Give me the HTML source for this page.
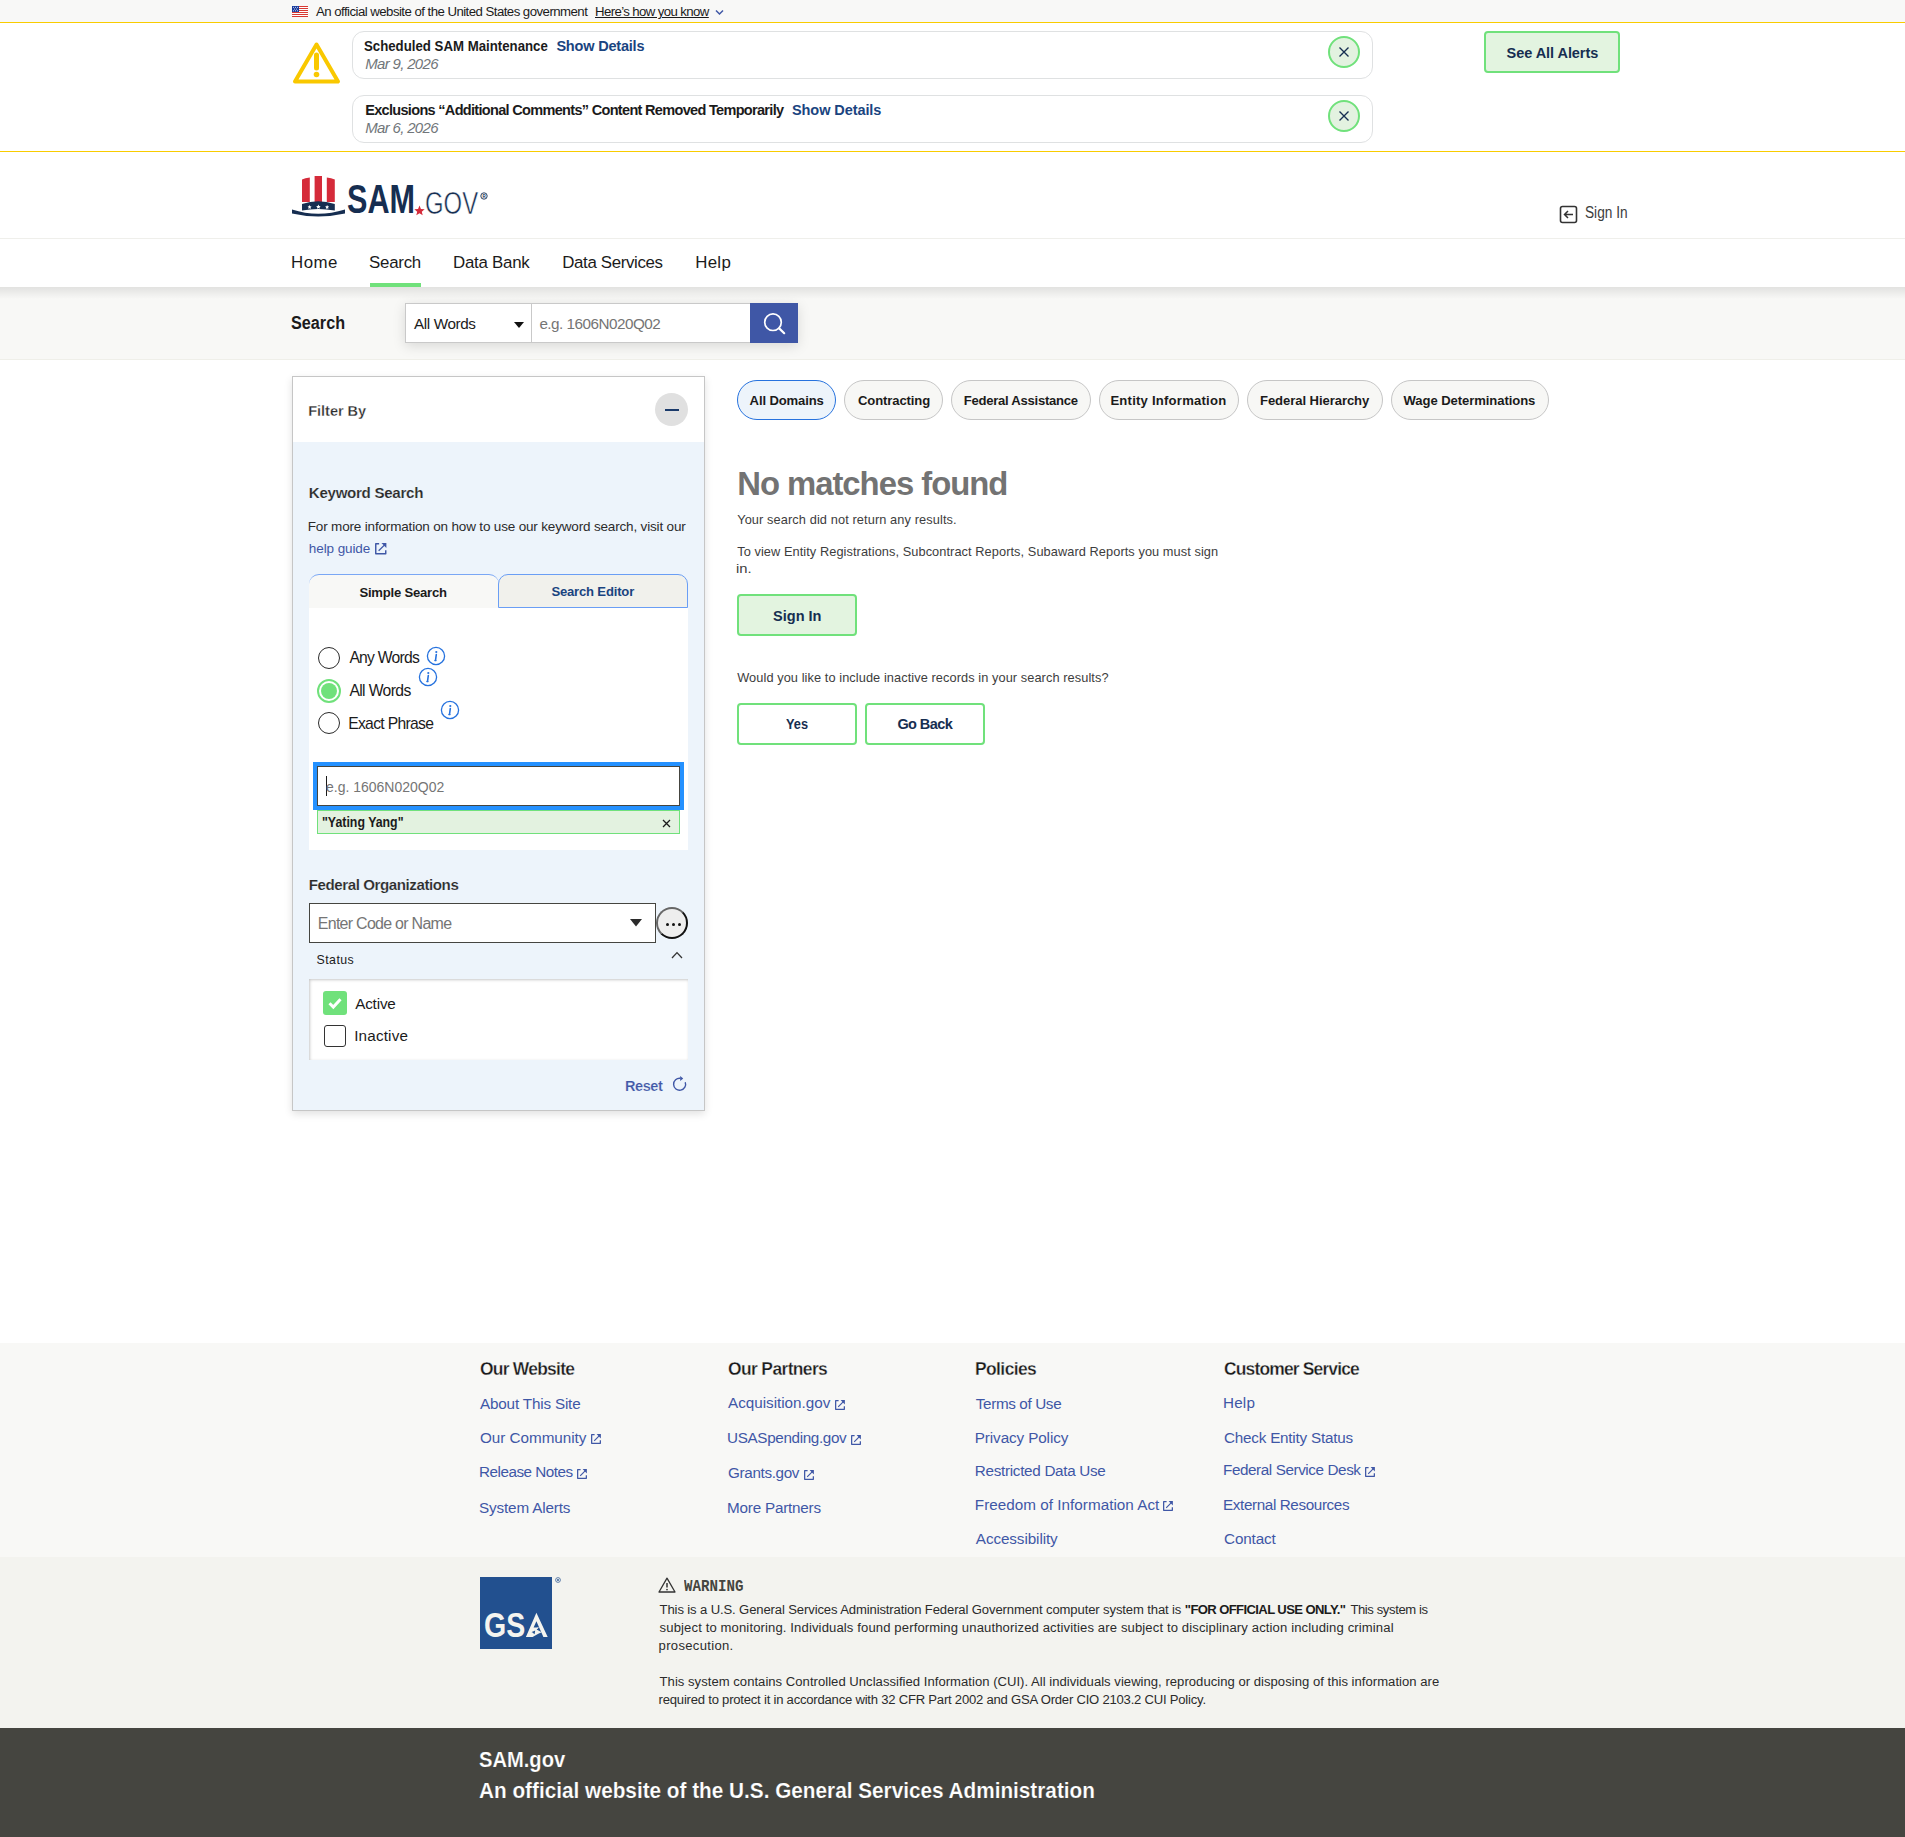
<!DOCTYPE html>
<html><head><meta charset="utf-8"><title>SAM.gov Search</title><style>
*{margin:0;padding:0;box-sizing:border-box}
html,body{width:1905px;height:1837px;overflow:hidden; background:#fff;font-family:"Liberation Sans",sans-serif;}
.t{position:absolute;white-space:nowrap;}
svg{position:absolute;display:block}
</style></head><body>
<div style="position:absolute;left:0px;top:0px;width:1905px;height:22px;background:#f8f8f7"></div>
<svg style="left:292px;top:6px" width="16" height="11" viewBox="0 0 16 11"><rect width="16" height="11" fill="#fff"/><rect y="0" width="16" height="1" fill="#d83933"/><rect y="2" width="16" height="1" fill="#d83933"/><rect y="4" width="16" height="1" fill="#d83933"/><rect y="6" width="16" height="1" fill="#d83933"/><rect y="8" width="16" height="1" fill="#d83933"/><rect y="10" width="16" height="1" fill="#d83933"/><rect width="7" height="6" fill="#1a3c9e"/><g fill="#fff"><circle cx="1.5" cy="1.3" r=".5"/><circle cx="3.5" cy="1.3" r=".5"/><circle cx="5.5" cy="1.3" r=".5"/><circle cx="2.5" cy="3" r=".5"/><circle cx="4.5" cy="3" r=".5"/><circle cx="1.5" cy="4.7" r=".5"/><circle cx="3.5" cy="4.7" r=".5"/><circle cx="5.5" cy="4.7" r=".5"/></g></svg>
<svg style="left:715px;top:9px" width="9" height="7" viewBox="0 0 9 7"><path d="M1 1.5l3.5 3.5L8 1.5" fill="none" stroke="#3f57a6" stroke-width="1.5"/></svg>
<div style="position:absolute;left:0px;top:22px;width:1905px;height:1px;background:#f9cc00"></div>
<svg style="left:292px;top:41px" width="49" height="44" viewBox="0 0 49 44"><path d="M24.5 3.5 L46 40.5 H3 Z" fill="none" stroke="#f9c800" stroke-width="4" stroke-linejoin="round"/><path d="M24.5 14v13" stroke="#f9c800" stroke-width="5" stroke-linecap="round"/><circle cx="24.5" cy="33.5" r="2.8" fill="#f9c800"/></svg>
<div style="position:absolute;left:352px;top:31px;width:1021px;height:48px;border:1px solid #dfe1e2;border-radius:12px;background:#fff"></div>
<div style="position:absolute;left:1328px;top:36px;width:32px;height:32px;border:2px solid #70e17b;border-radius:50%;background:#e3f2e0"></div>
<svg style="left:1338px;top:46px" width="12" height="12" viewBox="0 0 12 12"><path d="M1.5 1.5l9 9M10.5 1.5l-9 9" stroke="#162e51" stroke-width="1.35"/></svg>
<div style="position:absolute;left:352px;top:95px;width:1021px;height:48px;border:1px solid #dfe1e2;border-radius:12px;background:#fff"></div>
<div style="position:absolute;left:1328px;top:100px;width:32px;height:32px;border:2px solid #70e17b;border-radius:50%;background:#e3f2e0"></div>
<svg style="left:1338px;top:110px" width="12" height="12" viewBox="0 0 12 12"><path d="M1.5 1.5l9 9M10.5 1.5l-9 9" stroke="#162e51" stroke-width="1.35"/></svg>
<div style="position:absolute;left:1484px;top:31px;width:136px;height:42px;border:2px solid #70e17b;border-radius:4px;background:#e3f4e0"></div>
<div style="position:absolute;left:0px;top:151px;width:1905px;height:1px;background:#f9cc00"></div>
<svg style="left:291px;top:175px" width="56" height="42" viewBox="0 0 56 42"><path d="M11 4.5 Q14 3.2 18.8 2.6 V27 H11 Z" fill="#d52b3a"/><path d="M23.6 1 H31 V27 H23.6 Z" fill="#d52b3a"/><path d="M35.8 2.6 Q40.5 3.2 43.8 4.5 V27 H35.8 Z" fill="#d52b3a"/><path d="M11 29 Q27 23.5 43.8 29 V35.5 Q27 32.5 11 35.5 Z" fill="#162e51"/><path d="M1 34.5 Q27 43 54 34.5 V38.5 Q27 44.5 1 38.5 Z" fill="#162e51"/><path transform="translate(18.6 32.2) scale(2.1)" d="M0 -1 .29 -.4 .95 -.31 .47 .15 .59 .81 0 .5 -.59 .81 -.47 .15 -.95 -.31 -.29 -.4z" fill="#fff"/><path transform="translate(27.4 31.9) scale(2.4)" d="M0 -1 .29 -.4 .95 -.31 .47 .15 .59 .81 0 .5 -.59 .81 -.47 .15 -.95 -.31 -.29 -.4z" fill="#fff"/><path transform="translate(36.1 32.2) scale(2.1)" d="M0 -1 .29 -.4 .95 -.31 .47 .15 .59 .81 0 .5 -.59 .81 -.47 .15 -.95 -.31 -.29 -.4z" fill="#fff"/></svg>
<svg style="left:414px;top:205px" width="11" height="11" viewBox="0 0 24 24"><path d="M12 1l3.1 7.6 8.2.6-6.3 5.3 2 8L12 18.2 5 22.5l2-8L.7 9.2l8.2-.6z" fill="#d52b3a"/></svg>
<svg style="left:480px;top:192px" width="8" height="8" viewBox="0 0 8 8"><circle cx="4" cy="4" r="3.2" fill="none" stroke="#162e51" stroke-width=".9"/><text x="2.4" y="5.6" font-size="4.5" font-family="Liberation Sans" font-weight="700" fill="#162e51">R</text></svg>
<svg style="left:1559px;top:205px" width="19" height="19" viewBox="0 0 19 19"><rect x="1.5" y="1.5" width="16" height="16" rx="2" fill="none" stroke="#333" stroke-width="1.6"/><path d="M14 9.5H5.5M9 6 5.5 9.5 9 13" fill="none" stroke="#333" stroke-width="1.5"/></svg>
<div style="position:absolute;left:0px;top:238px;width:1905px;height:1px;background:#efefeb"></div>
<div style="position:absolute;left:370px;top:283px;width:51px;height:4px;background:#70e17b"></div>
<div style="position:absolute;left:0px;top:287px;width:1905px;height:72px;background:#f8f8f6"></div>
<div style="position:absolute;left:0px;top:359px;width:1905px;height:1px;background:#efefe9"></div>
<div style="position:absolute;left:0px;top:287px;width:1905px;height:12px;background:linear-gradient(rgba(0,0,0,.09),rgba(0,0,0,0))"></div>
<div style="position:absolute;left:405px;top:303px;width:393px;height:40px;box-shadow:0 3px 12px rgba(0,0,0,.13)"></div>
<div style="position:absolute;left:405px;top:303px;width:127px;height:40px;background:#fff;border:1px solid #c9c9c9"></div>
<div style="position:absolute;left:531px;top:303px;width:220px;height:40px;background:#fff;border:1px solid #c9c9c9"></div>
<div style="position:absolute;left:750px;top:303px;width:48px;height:40px;background:#3f57a6"></div>
<svg style="left:762px;top:311px" width="24" height="24" viewBox="0 0 24 24"><circle cx="11" cy="11.2" r="8.3" fill="none" stroke="#fff" stroke-width="1.7"/><path d="M17.2 17.4 22.2 22.2" stroke="#fff" stroke-width="2.2" stroke-linecap="round"/></svg>
<svg style="left:513px;top:321px" width="12" height="8" viewBox="0 0 12 8"><path d="M1 1h10L6 7z" fill="#111"/></svg>
<div style="position:absolute;left:292px;top:376px;width:413px;height:735px;border:1px solid #c6c6c6;background:#edf4fb;box-shadow:0 3px 8px rgba(0,0,0,.12)"></div>
<div style="position:absolute;left:293px;top:377px;width:411px;height:65px;background:#fff"></div>
<div style="position:absolute;left:655px;top:393px;width:33px;height:33px;background:#e0e0e0;border-radius:50%"></div>
<div style="position:absolute;left:665px;top:408.8px;width:14px;height:1.8px;background:#1a3a6a"></div>
<svg style="left:375px;top:543px" width="11.5" height="11.5" viewBox="0 0 10 10"><path d="M3.6 .65H.65V9.35H9.35V6.2" fill="none" stroke="#3f57a6" stroke-width="1.25" stroke-linejoin="round"/><path d="M3.2 6.8 8.6 1.4" fill="none" stroke="#3f57a6" stroke-width="1.15"/><path d="M5.6 .1H9.9V4.4Z" fill="#3f57a6"/></svg>
<div style="position:absolute;left:309px;top:574px;width:190px;height:34px;background:#f8f8f6;border-top:1px solid #7aa7f5;border-radius:10px 10px 0 0"></div>
<div style="position:absolute;left:498px;top:574px;width:190px;height:34px;background:#f1f1ec;border:1px solid #6a9ef5;border-radius:10px 10px 0 0"></div>
<div style="position:absolute;left:309px;top:608px;width:379px;height:242px;background:#fff"></div>
<div style="position:absolute;left:318px;top:646.8px;width:22px;height:22px;border:1.6px solid #2b2b2b;border-radius:50%;background:#fff"></div>
<div style="position:absolute;left:318px;top:711.9px;width:22px;height:22px;border:1.6px solid #2b2b2b;border-radius:50%;background:#fff"></div>
<div style="position:absolute;left:317px;top:679px;width:24px;height:24px;border:2.5px solid #70e17b;border-radius:50%;background:#fff"></div>
<div style="position:absolute;left:321px;top:683px;width:16px;height:16px;background:#70e17b;border-radius:50%"></div>
<svg style="left:426px;top:646px" width="20" height="20" viewBox="0 0 20 20"><circle cx="10" cy="10" r="8.6" fill="none" stroke="#2672de" stroke-width="1.3"/><path d="M10.3 8.5 9.5 14.4" stroke="#2672de" stroke-width="1.6" stroke-linecap="round"/><path d="M8.3 14.6h2.2" stroke="#2672de" stroke-width="1.1"/><circle cx="10.3" cy="6.0" r="1.1" fill="#2672de"/></svg>
<svg style="left:418px;top:667px" width="20" height="20" viewBox="0 0 20 20"><circle cx="10" cy="10" r="8.6" fill="none" stroke="#2672de" stroke-width="1.3"/><path d="M10.3 8.5 9.5 14.4" stroke="#2672de" stroke-width="1.6" stroke-linecap="round"/><path d="M8.3 14.6h2.2" stroke="#2672de" stroke-width="1.1"/><circle cx="10.3" cy="6.0" r="1.1" fill="#2672de"/></svg>
<svg style="left:440px;top:700px" width="20" height="20" viewBox="0 0 20 20"><circle cx="10" cy="10" r="8.6" fill="none" stroke="#2672de" stroke-width="1.3"/><path d="M10.3 8.5 9.5 14.4" stroke="#2672de" stroke-width="1.6" stroke-linecap="round"/><path d="M8.3 14.6h2.2" stroke="#2672de" stroke-width="1.1"/><circle cx="10.3" cy="6.0" r="1.1" fill="#2672de"/></svg>
<div style="position:absolute;left:313px;top:762px;width:371px;height:48px;background:#2491ff"></div>
<div style="position:absolute;left:317px;top:766px;width:363px;height:40px;background:#fff;border:1px solid #454540"></div>
<div style="position:absolute;left:326px;top:776px;width:1px;height:20px;background:#1b1b1b"></div>
<div style="position:absolute;left:317px;top:810px;width:363px;height:24px;background:#e3f2e0;border:1px solid #70e17b"></div>
<svg style="left:662px;top:818.5px" width="9" height="9" viewBox="0 0 9 9"><path d="M1 1l7 7M8 1 1 8" stroke="#1b1b1b" stroke-width="1.3"/></svg>
<div style="position:absolute;left:309px;top:903px;width:347px;height:40px;background:#fff;border:1px solid #454540"></div>
<svg style="left:629px;top:918px" width="14" height="10" viewBox="0 0 14 10"><path d="M1 1h12L7 8.5z" fill="#2b2b2b"/></svg>
<div style="position:absolute;left:655.8px;top:907px;width:32px;height:32px;border:2px solid #111;border-top-color:#666;border-left-color:#666;border-radius:50%;background:#eee"></div>
<div style="position:absolute;left:665.85px;top:922.6px;width:3.3px;height:3.3px;background:#111;border-radius:50%"></div>
<div style="position:absolute;left:671.65px;top:922.6px;width:3.3px;height:3.3px;background:#111;border-radius:50%"></div>
<div style="position:absolute;left:677.5500000000001px;top:922.6px;width:3.3px;height:3.3px;background:#111;border-radius:50%"></div>
<svg style="left:670.5px;top:951px" width="12" height="8" viewBox="0 0 12 8"><path d="M1 7 6 1.6 11 7" fill="none" stroke="#333" stroke-width="1.3"/></svg>
<div style="position:absolute;left:309px;top:979px;width:379px;height:81px;background:#fff;box-shadow:inset 1px 1px 3px rgba(0,0,0,.22)"></div>
<div style="position:absolute;left:323px;top:991px;width:24px;height:24px;background:#70e17b;border-radius:3px"></div>
<svg style="left:323px;top:991px" width="24" height="24" viewBox="0 0 24 24"><path d="M6.5 12.3 10.3 16 17.5 8.3" fill="none" stroke="#fff" stroke-width="3"/></svg>
<div style="position:absolute;left:324px;top:1025px;width:22px;height:22px;border:1.7px solid #333;border-radius:3px;background:#fff"></div>
<svg style="left:671px;top:1075px" width="18" height="18" viewBox="0 0 18 18"><path d="M9.4 3.3 A6 6 0 1 0 14.24 7.15" fill="none" stroke="#3f57a6" stroke-width="1.4"/><path d="M9.2 1.1 12.2 3.5 9.2 5.9z" fill="#3f57a6"/></svg>
<div style="position:absolute;left:737px;top:380px;width:99px;height:40px;border:1.5px solid #2672de;border-radius:20px;background:#edf4fb"></div>
<div style="position:absolute;left:844px;top:380px;width:99px;height:40px;border:1px solid #c6c6c6;border-radius:20px;background:#f7f7f5"></div>
<div style="position:absolute;left:951px;top:380px;width:140px;height:40px;border:1px solid #c6c6c6;border-radius:20px;background:#f7f7f5"></div>
<div style="position:absolute;left:1099px;top:380px;width:140px;height:40px;border:1px solid #c6c6c6;border-radius:20px;background:#f7f7f5"></div>
<div style="position:absolute;left:1247px;top:380px;width:136px;height:40px;border:1px solid #c6c6c6;border-radius:20px;background:#f7f7f5"></div>
<div style="position:absolute;left:1391px;top:380px;width:158px;height:40px;border:1px solid #c6c6c6;border-radius:20px;background:#f7f7f5"></div>
<div style="position:absolute;left:737px;top:594px;width:120px;height:42px;border:2px solid #70e17b;border-radius:4px;background:#e3f4e0"></div>
<div style="position:absolute;left:737px;top:703px;width:120px;height:42px;border:2px solid #70e17b;border-radius:4px;background:#fff"></div>
<div style="position:absolute;left:865px;top:703px;width:120px;height:42px;border:2px solid #70e17b;border-radius:4px;background:#fff"></div>
<div style="position:absolute;left:0px;top:1343px;width:1905px;height:214px;background:#f8f8f6"></div>
<div style="position:absolute;left:0px;top:1557px;width:1905px;height:171px;background:#f3f3ef"></div>
<div style="position:absolute;left:0px;top:1728px;width:1905px;height:109px;background:#454540"></div>
<svg style="left:590.8px;top:1434.1px" width="10" height="10" viewBox="0 0 10 10"><path d="M3.6 .65H.65V9.35H9.35V6.2" fill="none" stroke="#3f57a6" stroke-width="1.25" stroke-linejoin="round"/><path d="M3.2 6.8 8.6 1.4" fill="none" stroke="#3f57a6" stroke-width="1.15"/><path d="M5.6 .1H9.9V4.4Z" fill="#3f57a6"/></svg>
<svg style="left:577.0999999999999px;top:1468.8999999999999px" width="10" height="10" viewBox="0 0 10 10"><path d="M3.6 .65H.65V9.35H9.35V6.2" fill="none" stroke="#3f57a6" stroke-width="1.25" stroke-linejoin="round"/><path d="M3.2 6.8 8.6 1.4" fill="none" stroke="#3f57a6" stroke-width="1.15"/><path d="M5.6 .1H9.9V4.4Z" fill="#3f57a6"/></svg>
<svg style="left:834.8px;top:1400.0px" width="10" height="10" viewBox="0 0 10 10"><path d="M3.6 .65H.65V9.35H9.35V6.2" fill="none" stroke="#3f57a6" stroke-width="1.25" stroke-linejoin="round"/><path d="M3.2 6.8 8.6 1.4" fill="none" stroke="#3f57a6" stroke-width="1.15"/><path d="M5.6 .1H9.9V4.4Z" fill="#3f57a6"/></svg>
<svg style="left:851.3px;top:1435.0px" width="10" height="10" viewBox="0 0 10 10"><path d="M3.6 .65H.65V9.35H9.35V6.2" fill="none" stroke="#3f57a6" stroke-width="1.25" stroke-linejoin="round"/><path d="M3.2 6.8 8.6 1.4" fill="none" stroke="#3f57a6" stroke-width="1.15"/><path d="M5.6 .1H9.9V4.4Z" fill="#3f57a6"/></svg>
<svg style="left:804.0999999999999px;top:1469.8999999999999px" width="10" height="10" viewBox="0 0 10 10"><path d="M3.6 .65H.65V9.35H9.35V6.2" fill="none" stroke="#3f57a6" stroke-width="1.25" stroke-linejoin="round"/><path d="M3.2 6.8 8.6 1.4" fill="none" stroke="#3f57a6" stroke-width="1.15"/><path d="M5.6 .1H9.9V4.4Z" fill="#3f57a6"/></svg>
<svg style="left:1162.8999999999999px;top:1501.1px" width="10" height="10" viewBox="0 0 10 10"><path d="M3.6 .65H.65V9.35H9.35V6.2" fill="none" stroke="#3f57a6" stroke-width="1.25" stroke-linejoin="round"/><path d="M3.2 6.8 8.6 1.4" fill="none" stroke="#3f57a6" stroke-width="1.15"/><path d="M5.6 .1H9.9V4.4Z" fill="#3f57a6"/></svg>
<svg style="left:1365.3px;top:1466.8999999999999px" width="10" height="10" viewBox="0 0 10 10"><path d="M3.6 .65H.65V9.35H9.35V6.2" fill="none" stroke="#3f57a6" stroke-width="1.25" stroke-linejoin="round"/><path d="M3.2 6.8 8.6 1.4" fill="none" stroke="#3f57a6" stroke-width="1.15"/><path d="M5.6 .1H9.9V4.4Z" fill="#3f57a6"/></svg>
<div style="position:absolute;left:480px;top:1577px;width:72px;height:72px;background:#22508f"></div>
<svg style="left:524px;top:1611px" width="26" height="28" viewBox="0 0 26 28"><path d="M1.9 25.9 12.4 1.8 23.7 25.9H19.4L12.4 10.2 9.6 16.6H14.8L11.2 19.4 7.9 20.9 6 25.9Z" fill="#f4f4ef"/><path d="M12 17.2 13.9 16.6 14.8 16.6 12.6 18.6 17.7 21.2 14.3 22.8 8.6 25.9 2.2 25.9Z" fill="#f4f4ef"/><path d="M7.9 20.9 11.2 19.4 10.6 23.3Z" fill="#22508f"/></svg>
<svg style="left:555px;top:1577px" width="6" height="6" viewBox="0 0 6 6"><circle cx="3" cy="3" r="2.4" fill="none" stroke="#22508f" stroke-width=".7"/><circle cx="3" cy="3" r=".9" fill="#22508f"/></svg>
<svg style="left:658px;top:1577px" width="18" height="16" viewBox="0 0 18 16"><path d="M9 1.2 17 15H1z" fill="none" stroke="#333" stroke-width="1.3" stroke-linejoin="round"/><path d="M9 6v4.5" stroke="#333" stroke-width="1.5"/><circle cx="9" cy="12.6" r=".85" fill="#333"/></svg>
<div class="t" id="t0" style="left:316.000px;top:3px;font-size:13.227px;line-height:18px;font-weight:400;color:#1b1b1b;letter-spacing:-0.540px;font-family:'Liberation Sans',sans-serif;">An official website of the United States government</div>
<div class="t" id="t1" style="left:595.000px;top:3px;font-size:13.227px;line-height:18px;font-weight:400;color:#1b1b1b;letter-spacing:-0.611px;font-family:'Liberation Sans',sans-serif;text-decoration:underline;text-underline-offset:1px;">Here’s how you know</div>
<div class="t" id="t2" style="left:364.200px;top:37px;font-size:14.535px;line-height:19px;font-weight:700;color:#1b1b1b;letter-spacing:0.000px;font-family:'Liberation Sans',sans-serif;transform:scaleX(0.9115);transform-origin:0 0;">Scheduled SAM Maintenance</div>
<div class="t" id="t3" style="left:556.400px;top:37px;font-size:14.535px;line-height:19px;font-weight:700;color:#1a4480;letter-spacing:-0.200px;font-family:'Liberation Sans',sans-serif;">Show Details</div>
<div class="t" id="t4" style="left:365.200px;top:54px;font-size:14.971px;line-height:20px;font-weight:400;color:#71767a;letter-spacing:-0.660px;font-family:'Liberation Sans',sans-serif;font-style:italic;">Mar 9, 2026</div>
<div class="t" id="t5" style="left:365.200px;top:101px;font-size:14.535px;line-height:19px;font-weight:700;color:#1b1b1b;letter-spacing:-0.688px;font-family:'Liberation Sans',sans-serif;">Exclusions “Additional Comments” Content Removed Temporarily</div>
<div class="t" id="t6" style="left:792.000px;top:101px;font-size:14.535px;line-height:19px;font-weight:700;color:#1a4480;letter-spacing:-0.091px;font-family:'Liberation Sans',sans-serif;">Show Details</div>
<div class="t" id="t7" style="left:365.200px;top:118px;font-size:14.971px;line-height:20px;font-weight:400;color:#71767a;letter-spacing:-0.660px;font-family:'Liberation Sans',sans-serif;font-style:italic;">Mar 6, 2026</div>
<div class="t" id="t8" style="left:1506.600px;top:44px;font-size:14.535px;line-height:19px;font-weight:700;color:#162e51;letter-spacing:-0.062px;font-family:'Liberation Sans',sans-serif;">See All Alerts</div>
<div class="t" id="t9" style="left:347.000px;top:173px;font-size:40.698px;line-height:53px;font-weight:700;color:#162e51;letter-spacing:0.000px;font-family:'Liberation Sans',sans-serif;transform:scaleX(0.7521);transform-origin:0 0;">SAM</div>
<div class="t" id="t10" style="left:425.000px;top:182px;font-size:31.977px;line-height:42px;font-weight:400;color:#162e51;letter-spacing:0.000px;font-family:'Liberation Sans',sans-serif;transform:scaleX(0.7472);transform-origin:0 0;-webkit-text-stroke:0.6px #fff;">GOV</div>
<div class="t" id="t11" style="left:1585.200px;top:202px;font-size:15.989px;line-height:21px;font-weight:400;color:#3d3d3d;letter-spacing:0.000px;font-family:'Liberation Sans',sans-serif;transform:scaleX(0.8567);transform-origin:0 0;">Sign In</div>
<div class="t" id="t12" style="left:291.000px;top:252px;font-size:16.861px;line-height:22px;font-weight:400;color:#1b1b1b;letter-spacing:0.467px;font-family:'Liberation Sans',sans-serif;">Home</div>
<div class="t" id="t13" style="left:369.000px;top:252px;font-size:16.861px;line-height:22px;font-weight:400;color:#1b1b1b;letter-spacing:-0.240px;font-family:'Liberation Sans',sans-serif;">Search</div>
<div class="t" id="t14" style="left:453.000px;top:252px;font-size:16.861px;line-height:22px;font-weight:400;color:#1b1b1b;letter-spacing:-0.250px;font-family:'Liberation Sans',sans-serif;">Data Bank</div>
<div class="t" id="t15" style="left:562.200px;top:252px;font-size:16.861px;line-height:22px;font-weight:400;color:#1b1b1b;letter-spacing:-0.342px;font-family:'Liberation Sans',sans-serif;">Data Services</div>
<div class="t" id="t16" style="left:695.200px;top:252px;font-size:16.861px;line-height:22px;font-weight:400;color:#1b1b1b;letter-spacing:0.300px;font-family:'Liberation Sans',sans-serif;">Help</div>
<div class="t" id="t17" style="left:291.000px;top:312px;font-size:17.442px;line-height:23px;font-weight:700;color:#1b1b1b;letter-spacing:0.000px;font-family:'Liberation Sans',sans-serif;transform:scaleX(0.9290);transform-origin:0 0;">Search</div>
<div class="t" id="t18" style="left:414.000px;top:314px;font-size:15.262px;line-height:20px;font-weight:400;color:#1b1b1b;letter-spacing:-0.375px;font-family:'Liberation Sans',sans-serif;">All Words</div>
<div class="t" id="t19" style="left:539.400px;top:314px;font-size:15.262px;line-height:20px;font-weight:400;color:#757575;letter-spacing:-0.500px;font-family:'Liberation Sans',sans-serif;">e.g. 1606N020Q02</div>
<div class="t" id="t20" style="left:308.200px;top:402px;font-size:14.535px;line-height:19px;font-weight:700;color:#2b2b2b;letter-spacing:-0.013px;font-family:'Liberation Sans',sans-serif;-webkit-text-stroke:0.28px #fff;">Filter By</div>
<div class="t" id="t21" style="left:308.800px;top:483px;font-size:15.117px;line-height:20px;font-weight:700;color:#2b2b2b;letter-spacing:-0.292px;font-family:'Liberation Sans',sans-serif;-webkit-text-stroke:0.15px #edf4fb;">Keyword Search</div>
<div class="t" id="t22" style="left:307.800px;top:518px;font-size:13.518px;line-height:18px;font-weight:400;color:#2b2b2b;letter-spacing:-0.170px;font-family:'Liberation Sans',sans-serif;">For more information on how to use our keyword search, visit our</div>
<div class="t" id="t23" style="left:308.800px;top:540px;font-size:13.518px;line-height:18px;font-weight:400;color:#3f57a6;letter-spacing:-0.089px;font-family:'Liberation Sans',sans-serif;">help guide</div>
<div class="t" id="t24" style="left:359.400px;top:584px;font-size:13.082px;line-height:18px;font-weight:700;color:#1b1b1b;letter-spacing:-0.208px;font-family:'Liberation Sans',sans-serif;">Simple Search</div>
<div class="t" id="t25" style="left:551.400px;top:583px;font-size:13.082px;line-height:18px;font-weight:700;color:#1a4480;letter-spacing:-0.183px;font-family:'Liberation Sans',sans-serif;">Search Editor</div>
<div class="t" id="t26" style="left:349.400px;top:647px;font-size:15.698px;line-height:21px;font-weight:400;color:#1b1b1b;letter-spacing:-0.750px;font-family:'Liberation Sans',sans-serif;">Any Words</div>
<div class="t" id="t27" style="left:349.400px;top:680px;font-size:15.698px;line-height:21px;font-weight:400;color:#1b1b1b;letter-spacing:-0.625px;font-family:'Liberation Sans',sans-serif;">All Words</div>
<div class="t" id="t28" style="left:348.200px;top:713px;font-size:15.698px;line-height:21px;font-weight:400;color:#1b1b1b;letter-spacing:-0.691px;font-family:'Liberation Sans',sans-serif;">Exact Phrase</div>
<div class="t" id="t29" style="left:326.000px;top:776px;font-size:15.407px;line-height:21px;font-weight:400;color:#757575;letter-spacing:0.000px;font-family:'Liberation Sans',sans-serif;transform:scaleX(0.9094);transform-origin:0 0;">e.g. 1606N020Q02</div>
<div class="t" id="t30" style="left:322.200px;top:813px;font-size:14.099px;line-height:19px;font-weight:700;color:#1b1b1b;letter-spacing:0.000px;font-family:'Liberation Sans',sans-serif;transform:scaleX(0.8776);transform-origin:0 0;">"Yating Yang"</div>
<div class="t" id="t31" style="left:308.800px;top:875px;font-size:15.117px;line-height:20px;font-weight:700;color:#2b2b2b;letter-spacing:-0.435px;font-family:'Liberation Sans',sans-serif;-webkit-text-stroke:0.15px #edf4fb;">Federal Organizations</div>
<div class="t" id="t32" style="left:317.800px;top:913px;font-size:15.989px;line-height:21px;font-weight:400;color:#757575;letter-spacing:-0.718px;font-family:'Liberation Sans',sans-serif;">Enter Code or Name</div>
<div class="t" id="t33" style="left:316.600px;top:952px;font-size:12.355px;line-height:17px;font-weight:400;color:#1b1b1b;letter-spacing:0.420px;font-family:'Liberation Sans',sans-serif;">Status</div>
<div class="t" id="t34" style="left:355.200px;top:994px;font-size:15.262px;line-height:20px;font-weight:400;color:#1b1b1b;letter-spacing:-0.180px;font-family:'Liberation Sans',sans-serif;">Active</div>
<div class="t" id="t35" style="left:354.200px;top:1026px;font-size:15.262px;line-height:20px;font-weight:400;color:#1b1b1b;letter-spacing:0.171px;font-family:'Liberation Sans',sans-serif;">Inactive</div>
<div class="t" id="t36" style="left:625.000px;top:1077px;font-size:14.535px;line-height:19px;font-weight:700;color:#3f57a6;letter-spacing:-0.450px;font-family:'Liberation Sans',sans-serif;-webkit-text-stroke:0.20px #edf4fb;">Reset</div>
<div class="t" id="t37" style="left:749.600px;top:392px;font-size:13.082px;line-height:18px;font-weight:700;color:#1b1b1b;letter-spacing:-0.130px;font-family:'Liberation Sans',sans-serif;">All Domains</div>
<div class="t" id="t38" style="left:858.000px;top:392px;font-size:13.082px;line-height:18px;font-weight:700;color:#1b1b1b;letter-spacing:-0.120px;font-family:'Liberation Sans',sans-serif;">Contracting</div>
<div class="t" id="t39" style="left:963.800px;top:392px;font-size:13.082px;line-height:18px;font-weight:700;color:#1b1b1b;letter-spacing:-0.265px;font-family:'Liberation Sans',sans-serif;">Federal Assistance</div>
<div class="t" id="t40" style="left:1110.400px;top:392px;font-size:13.082px;line-height:18px;font-weight:700;color:#1b1b1b;letter-spacing:0.229px;font-family:'Liberation Sans',sans-serif;">Entity Information</div>
<div class="t" id="t41" style="left:1260.000px;top:392px;font-size:13.082px;line-height:18px;font-weight:700;color:#1b1b1b;letter-spacing:-0.075px;font-family:'Liberation Sans',sans-serif;">Federal Hierarchy</div>
<div class="t" id="t42" style="left:1403.600px;top:392px;font-size:13.082px;line-height:18px;font-weight:700;color:#1b1b1b;letter-spacing:-0.083px;font-family:'Liberation Sans',sans-serif;">Wage Determinations</div>
<div class="t" id="t43" style="left:737.200px;top:462px;font-size:32.849px;line-height:43px;font-weight:700;color:#737373;letter-spacing:-1.013px;font-family:'Liberation Sans',sans-serif;">No matches found</div>
<div class="t" id="t44" style="left:737.200px;top:511px;font-size:12.791px;line-height:17px;font-weight:400;color:#3d3d3d;letter-spacing:0.103px;font-family:'Liberation Sans',sans-serif;">Your search did not return any results.</div>
<div class="t" id="t45" style="left:737.200px;top:543px;font-size:12.791px;line-height:17px;font-weight:400;color:#3d3d3d;letter-spacing:0.071px;font-family:'Liberation Sans',sans-serif;">To view Entity Registrations, Subcontract Reports, Subaward Reports you must sign</div>
<div class="t" id="t46" style="left:736.200px;top:560px;font-size:12.791px;line-height:17px;font-weight:400;color:#3d3d3d;letter-spacing:0.000px;font-family:'Liberation Sans',sans-serif;transform:scaleX(1.1548);transform-origin:0 0;">in.</div>
<div class="t" id="t47" style="left:773.000px;top:607px;font-size:14.535px;line-height:19px;font-weight:700;color:#162e51;letter-spacing:0.017px;font-family:'Liberation Sans',sans-serif;">Sign In</div>
<div class="t" id="t48" style="left:737.200px;top:669px;font-size:12.791px;line-height:17px;font-weight:400;color:#3d3d3d;letter-spacing:0.077px;font-family:'Liberation Sans',sans-serif;">Would you like to include inactive records in your search results?</div>
<div class="t" id="t49" style="left:786.400px;top:715px;font-size:14.535px;line-height:19px;font-weight:700;color:#162e51;letter-spacing:0.000px;font-family:'Liberation Sans',sans-serif;transform:scaleX(0.8823);transform-origin:0 0;">Yes</div>
<div class="t" id="t50" style="left:897.400px;top:715px;font-size:14.535px;line-height:19px;font-weight:700;color:#162e51;letter-spacing:-0.583px;font-family:'Liberation Sans',sans-serif;">Go Back</div>
<div class="t" id="t51" style="left:480.000px;top:1358px;font-size:17.442px;line-height:23px;font-weight:700;color:#1b1b1b;letter-spacing:-0.750px;font-family:'Liberation Sans',sans-serif;-webkit-text-stroke:0.28px #f8f8f6;">Our Website</div>
<div class="t" id="t52" style="left:728.000px;top:1358px;font-size:17.442px;line-height:23px;font-weight:700;color:#1b1b1b;letter-spacing:-0.618px;font-family:'Liberation Sans',sans-serif;-webkit-text-stroke:0.28px #f8f8f6;">Our Partners</div>
<div class="t" id="t53" style="left:975.000px;top:1358px;font-size:17.442px;line-height:23px;font-weight:700;color:#1b1b1b;letter-spacing:-0.586px;font-family:'Liberation Sans',sans-serif;-webkit-text-stroke:0.28px #f8f8f6;">Policies</div>
<div class="t" id="t54" style="left:1224.000px;top:1358px;font-size:17.442px;line-height:23px;font-weight:700;color:#1b1b1b;letter-spacing:-0.833px;font-family:'Liberation Sans',sans-serif;-webkit-text-stroke:0.28px #f8f8f6;">Customer Service</div>
<div class="t" id="t55" style="left:480.000px;top:1394px;font-size:15.262px;line-height:20px;font-weight:400;color:#3f57a6;letter-spacing:-0.179px;font-family:'Liberation Sans',sans-serif;">About This Site</div>
<div class="t" id="t56" style="left:480.000px;top:1428px;font-size:15.262px;line-height:20px;font-weight:400;color:#3f57a6;letter-spacing:-0.033px;font-family:'Liberation Sans',sans-serif;">Our Community</div>
<div class="t" id="t57" style="left:479.000px;top:1462px;font-size:15.262px;line-height:20px;font-weight:400;color:#3f57a6;letter-spacing:-0.492px;font-family:'Liberation Sans',sans-serif;">Release Notes</div>
<div class="t" id="t58" style="left:479.000px;top:1498px;font-size:15.262px;line-height:20px;font-weight:400;color:#3f57a6;letter-spacing:-0.150px;font-family:'Liberation Sans',sans-serif;">System Alerts</div>
<div class="t" id="t59" style="left:728.000px;top:1393px;font-size:15.262px;line-height:20px;font-weight:400;color:#3f57a6;letter-spacing:-0.021px;font-family:'Liberation Sans',sans-serif;">Acquisition.gov</div>
<div class="t" id="t60" style="left:727.000px;top:1428px;font-size:15.262px;line-height:20px;font-weight:400;color:#3f57a6;letter-spacing:-0.350px;font-family:'Liberation Sans',sans-serif;">USASpending.gov</div>
<div class="t" id="t61" style="left:728.000px;top:1463px;font-size:15.262px;line-height:20px;font-weight:400;color:#3f57a6;letter-spacing:-0.344px;font-family:'Liberation Sans',sans-serif;">Grants.gov</div>
<div class="t" id="t62" style="left:727.000px;top:1498px;font-size:15.262px;line-height:20px;font-weight:400;color:#3f57a6;letter-spacing:-0.208px;font-family:'Liberation Sans',sans-serif;">More Partners</div>
<div class="t" id="t63" style="left:975.800px;top:1394px;font-size:15.262px;line-height:20px;font-weight:400;color:#3f57a6;letter-spacing:-0.364px;font-family:'Liberation Sans',sans-serif;">Terms of Use</div>
<div class="t" id="t64" style="left:974.800px;top:1428px;font-size:15.262px;line-height:20px;font-weight:400;color:#3f57a6;letter-spacing:-0.108px;font-family:'Liberation Sans',sans-serif;">Privacy Policy</div>
<div class="t" id="t65" style="left:974.800px;top:1461px;font-size:15.262px;line-height:20px;font-weight:400;color:#3f57a6;letter-spacing:-0.300px;font-family:'Liberation Sans',sans-serif;">Restricted Data Use</div>
<div class="t" id="t66" style="left:974.800px;top:1495px;font-size:15.262px;line-height:20px;font-weight:400;color:#3f57a6;letter-spacing:0.024px;font-family:'Liberation Sans',sans-serif;">Freedom of Information Act</div>
<div class="t" id="t67" style="left:975.800px;top:1529px;font-size:15.262px;line-height:20px;font-weight:400;color:#3f57a6;letter-spacing:-0.092px;font-family:'Liberation Sans',sans-serif;">Accessibility</div>
<div class="t" id="t68" style="left:1223.000px;top:1393px;font-size:15.262px;line-height:20px;font-weight:400;color:#3f57a6;letter-spacing:0.167px;font-family:'Liberation Sans',sans-serif;">Help</div>
<div class="t" id="t69" style="left:1224.000px;top:1428px;font-size:15.262px;line-height:20px;font-weight:400;color:#3f57a6;letter-spacing:-0.222px;font-family:'Liberation Sans',sans-serif;">Check Entity Status</div>
<div class="t" id="t70" style="left:1223.000px;top:1460px;font-size:15.262px;line-height:20px;font-weight:400;color:#3f57a6;letter-spacing:-0.411px;font-family:'Liberation Sans',sans-serif;">Federal Service Desk</div>
<div class="t" id="t71" style="left:1223.000px;top:1495px;font-size:15.262px;line-height:20px;font-weight:400;color:#3f57a6;letter-spacing:-0.382px;font-family:'Liberation Sans',sans-serif;">External Resources</div>
<div class="t" id="t72" style="left:1224.000px;top:1529px;font-size:15.262px;line-height:20px;font-weight:400;color:#3f57a6;letter-spacing:-0.133px;font-family:'Liberation Sans',sans-serif;">Contact</div>
<div class="t" id="t73" style="left:484.000px;top:1603px;font-size:34.158px;line-height:45px;font-weight:700;color:#f4f4ef;letter-spacing:0.000px;font-family:'Liberation Sans',sans-serif;transform:scaleX(0.8360);transform-origin:0 0;">GS</div>
<div class="t" id="t74" style="left:683.800px;top:1576px;font-size:16.700px;line-height:22px;font-weight:700;color:#454540;letter-spacing:0.000px;font-family:'Liberation Mono',monospace;transform:scaleX(0.8491);transform-origin:0 0;">WARNING</div>
<div class="t" id="t75" style="left:659.600px;top:1601px;font-size:13.082px;line-height:18px;font-weight:400;color:#2b2b2b;letter-spacing:-0.125px;font-family:'Liberation Sans',sans-serif;">This is a U.S. General Services Administration Federal Government computer system that is</div>
<div class="t" id="t76" style="left:1184.800px;top:1601px;font-size:13.082px;line-height:18px;font-weight:700;color:#1b1b1b;letter-spacing:-0.613px;font-family:'Liberation Sans',sans-serif;">"FOR OFFICIAL USE ONLY."</div>
<div class="t" id="t77" style="left:1350.400px;top:1601px;font-size:13.082px;line-height:18px;font-weight:400;color:#2b2b2b;letter-spacing:-0.400px;font-family:'Liberation Sans',sans-serif;">This system is</div>
<div class="t" id="t78" style="left:659.600px;top:1619px;font-size:13.082px;line-height:18px;font-weight:400;color:#2b2b2b;letter-spacing:0.123px;font-family:'Liberation Sans',sans-serif;">subject to monitoring. Individuals found performing unauthorized activities are subject to disciplinary action including criminal</div>
<div class="t" id="t79" style="left:658.600px;top:1637px;font-size:13.082px;line-height:18px;font-weight:400;color:#2b2b2b;letter-spacing:0.309px;font-family:'Liberation Sans',sans-serif;">prosecution.</div>
<div class="t" id="t80" style="left:659.600px;top:1673px;font-size:13.082px;line-height:18px;font-weight:400;color:#2b2b2b;letter-spacing:0.024px;font-family:'Liberation Sans',sans-serif;">This system contains Controlled Unclassified Information (CUI). All individuals viewing, reproducing or disposing of this information are</div>
<div class="t" id="t81" style="left:658.600px;top:1691px;font-size:13.082px;line-height:18px;font-weight:400;color:#2b2b2b;letter-spacing:-0.221px;font-family:'Liberation Sans',sans-serif;">required to protect it in accordance with 32 CFR Part 2002 and GSA Order CIO 2103.2 CUI Policy.</div>
<div class="t" id="t82" style="left:479.400px;top:1744px;font-size:22.820px;line-height:30px;font-weight:700;color:#fff;letter-spacing:0.000px;font-family:'Liberation Sans',sans-serif;transform:scaleX(0.8828);transform-origin:0 0;-webkit-text-stroke:0.20px #454540;">SAM.gov</div>
<div class="t" id="t83" style="left:479.000px;top:1775px;font-size:22.966px;line-height:30px;font-weight:700;color:#fff;letter-spacing:0.000px;font-family:'Liberation Sans',sans-serif;transform:scaleX(0.9037);transform-origin:0 0;-webkit-text-stroke:0.20px #454540;">An official website of the U.S. General Services Administration</div>
</body></html>
